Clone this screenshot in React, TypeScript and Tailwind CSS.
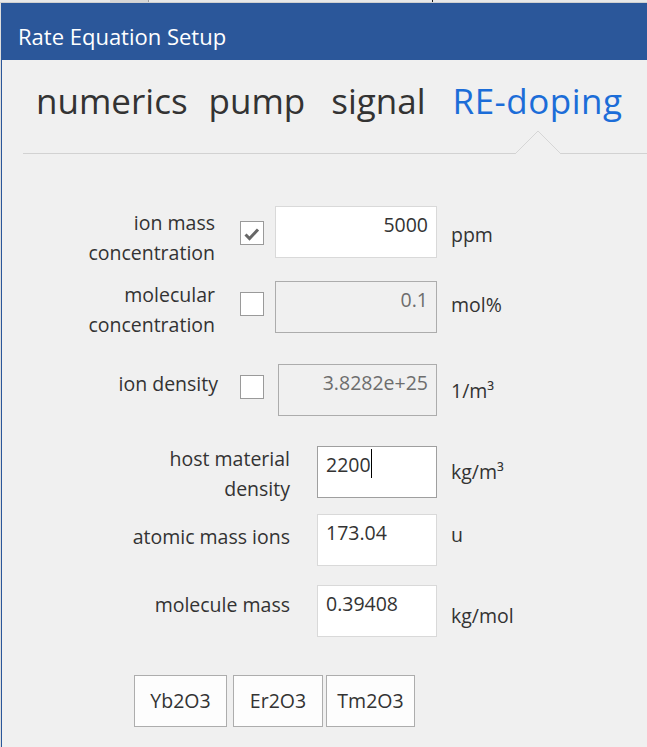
import React from "react";

type CheckRowProps = {
  label: string[];
  labelWidth: string;
  labelTop: string;
  checked: boolean;
  boxGap: string;
  boxTop: string;
  inputGap: string;
  inputWidth: string;
  value: string;
  enabled: boolean;
  unit: React.ReactNode;
  unitTop: string;
  rowTop: string;
};

function CheckBox({ checked }: { checked: boolean }) {
  return (
    <div className="w-[24px] h-[24px] border border-[#9a9a9a] bg-white flex items-center justify-center">
      {checked && (
        <svg width="22" height="22" viewBox="0 0 22 22">
          <polyline
            points="4.5,12.5 8.5,16.5 17,7.5"
            fill="none"
            stroke="#676767"
            strokeWidth="3"
          />
        </svg>
      )}
    </div>
  );
}

function CheckRow(p: CheckRowProps) {
  return (
    <div className={`flex items-start h-[52px] ${p.rowTop}`}>
      <div className={`${p.labelWidth} ${p.labelTop} text-right leading-[30px] shrink-0`}>
        {p.label.map((l) => (
          <div key={l}>{l}</div>
        ))}
      </div>
      <div className={`${p.boxGap} ${p.boxTop} shrink-0`}>
        <CheckBox checked={p.checked} />
      </div>
      <div
        className={`${p.inputGap} ${p.inputWidth} h-[52px] shrink-0 border pt-[3px] pr-[8px] text-right leading-[30px] ${
          p.enabled
            ? "bg-white border-[#d9d9d9] text-[#333]"
            : "bg-[#f0f0f0] border-[#acacac] text-[#6d6d6d]"
        }`}
      >
        {p.value}
      </div>
      <div className={`ml-[14px] ${p.unitTop} leading-[30px]`}>{p.unit}</div>
    </div>
  );
}

type PlainRowProps = {
  label: string[];
  labelTop: string;
  value: string;
  focused?: boolean;
  unit: string;
  unitTop: string;
  rowTop: string;
};

function PlainRow(p: PlainRowProps) {
  return (
    <div className={`flex items-start h-[52px] ${p.rowTop}`}>
      <div className={`w-[288px] ${p.labelTop} text-right leading-[30px] shrink-0`}>
        {p.label.map((l) => (
          <div key={l}>{l}</div>
        ))}
      </div>
      <div
        className={`ml-[27px] w-[120px] h-[52px] shrink-0 border bg-white pt-[3px] pl-[8px] leading-[30px] flex items-start ${
          p.focused ? "border-[#9f9f9f]" : "border-[#d9d9d9]"
        }`}
      >
        <span>{p.value}</span>
        {p.focused && <span className="w-px h-[29px] bg-black -mt-[1px]" />}
      </div>
      <div className={`ml-[14px] ${p.unitTop} leading-[30px]`}>{p.unit}</div>
    </div>
  );
}

const tabs = [
  { name: "numerics", gap: "" },
  { name: "pump", gap: "ml-[21px]" },
  { name: "signal", gap: "ml-[26px]" },
  { name: "RE-doping", gap: "ml-[27px] tracking-[0.5px]" },
];

export default function App() {
  return (
    <div className="w-[647px] h-[747px] overflow-hidden bg-[#f0f0f0] font-['Open_Sans',sans-serif] text-[#333] flex flex-col">
      {/* desktop strip above the window */}
      <div className="h-[3px] shrink-0 flex bg-[#e8e8e8] border-b border-[#d0d0d0]">
        <div className="w-[110px]" />
        <div className="w-[38px] bg-[#d6d6d6]" />
        <div className="w-px bg-[#a0a0a0]" />
        <div className="w-[283px]" />
        <div className="w-px bg-[#1a1a1a]" />
      </div>

      <div className="flex flex-1 min-h-0">
        <div className="w-px bg-[#dedede] shrink-0" />
        <div className="flex-1 flex flex-col border-l border-[#2b579a]">
          {/* title bar */}
          <div className="h-[57px] shrink-0 bg-[#2b579a] text-white text-[22px] leading-[28px] pl-[16px] pt-[19px]">
            Rate Equation Setup
          </div>

          {/* tab strip */}
          <div className="ml-[21px] flex border-b border-[#d2d2d2] pl-[13px] text-[35px] leading-[48px]">
            {tabs.map((t, i) => {
              const active = i === tabs.length - 1;
              return (
                <div
                  key={t.name}
                  className={`relative pt-[17px] pb-[28px] ${t.gap} ${active ? "text-[#1c6dd8]" : "text-[#333]"}`}
                >
                  {t.name}
                  {active && (
                    <svg
                      className="absolute left-1/2 -translate-x-1/2 -bottom-[1px]"
                      width="45"
                      height="24"
                      viewBox="0 0 45 24"
                    >
                      <rect x="0.5" y="22" width="44" height="2" fill="#f0f0f0" />
                      <polyline
                        points="0,23.5 22.5,1 45,23.5"
                        fill="#f0f0f0"
                        stroke="#d6d6d6"
                        strokeWidth="1"
                      />
                    </svg>
                  )}
                </div>
              );
            })}
          </div>

          {/* doping parameters */}
          <div className="flex flex-col text-[19.5px]">
            <CheckRow
              rowTop="mt-[52px]"
              label={["ion mass", "concentration"]}
              labelWidth="w-[213px]"
              labelTop="mt-[2px]"
              checked
              boxGap="ml-[25px]"
              boxTop="mt-[15px]"
              inputGap="ml-[11px]"
              inputWidth="w-[162px]"
              value="5000"
              enabled
              unit="ppm"
              unitTop="mt-[14px]"
            />
            <CheckRow
              rowTop="mt-[23px]"
              label={["molecular", "concentration"]}
              labelWidth="w-[213px]"
              labelTop="-mt-[1px]"
              checked={false}
              boxGap="ml-[25px]"
              boxTop="mt-[11px]"
              inputGap="ml-[11px]"
              inputWidth="w-[162px]"
              value="0.1"
              enabled={false}
              unit="mol%"
              unitTop="mt-[9px]"
            />
            <CheckRow
              rowTop="mt-[31px]"
              label={["ion density"]}
              labelWidth="w-[216px]"
              labelTop="mt-[5px]"
              checked={false}
              boxGap="ml-[22px]"
              boxTop="mt-[11px]"
              inputGap="ml-[14px]"
              inputWidth="w-[159px]"
              value="3.8282e+25"
              enabled={false}
              unit="1/m³"
              unitTop="mt-[12px]"
            />
            <PlainRow
              rowTop="mt-[30px]"
              label={["host material", "density"]}
              labelTop="-mt-[2px]"
              value="2200"
              focused
              unit="kg/m³"
              unitTop="mt-[11px]"
            />
            <PlainRow
              rowTop="mt-[16px]"
              label={["atomic mass ions"]}
              labelTop="mt-[8px]"
              value="173.04"
              unit="u"
              unitTop="mt-[6px]"
            />
            <PlainRow
              rowTop="mt-[19px]"
              label={["molecule mass"]}
              labelTop="mt-[5px]"
              value="0.39408"
              unit="kg/mol"
              unitTop="mt-[16px]"
            />

            {/* oxide presets */}
            <div className="flex mt-[38px] ml-[132px]">
              <button className="w-[93px] h-[52px] border border-[#adadad] bg-[#fdfdfd] text-[#333]">
                Yb2O3
              </button>
              <button className="ml-[6px] w-[90px] h-[52px] border border-[#adadad] bg-[#fdfdfd] text-[#333]">
                Er2O3
              </button>
              <button className="ml-[3px] w-[89px] h-[52px] border border-[#adadad] bg-[#fdfdfd] text-[#333]">
                Tm2O3
              </button>
            </div>
          </div>
        </div>
      </div>
    </div>
  );
}
